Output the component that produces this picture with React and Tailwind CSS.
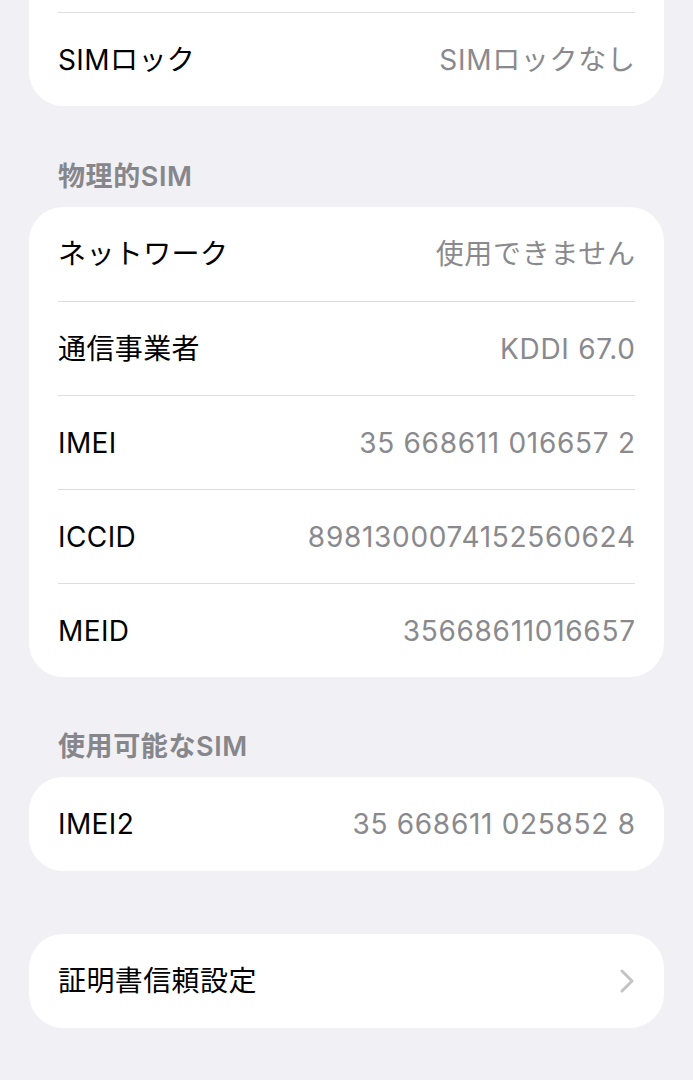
import React from 'react'

const font = { fontFamily: 'Inter, "Noto Sans CJK JP", sans-serif' }

const Row = ({ label, value, first, chevron, h = 'h-[94px]' }) => (
  <div
    className={
      'mx-[29px] flex items-center justify-between ' + h + ' ' +
      (first ? '' : 'border-t border-[#dedee2]')
    }
  >
    <span className="text-[28px] text-black tracking-[0.4px]">{label}</span>
    {chevron ? (
      <svg width="14" height="24" viewBox="0 0 14 24" className="mr-[1px]">
        <polyline
          points="2,2 12,12 2,22"
          fill="none"
          stroke="#c4c4c7"
          strokeWidth="3"
          strokeLinecap="round"
          strokeLinejoin="round"
        />
      </svg>
    ) : (
      <span className="text-[28px] text-[#8a8a8e] tracking-[0.7px] -mr-[0.7px]">{value}</span>
    )}
  </div>
)

const Header = ({ children }) => (
  <div className="px-[58px] h-[34px] leading-[34px] text-[27px] font-semibold text-[#86868b] tracking-[0.6px] mb-[13px]">
    {children}
  </div>
)

export default function App() {
  return (
    <div className="min-h-[1080px] bg-[#f0f0f5] overflow-hidden" style={font}>
      {/* top card, cut off above the window */}
      <div className="mx-[29px] bg-white rounded-b-[34px] pt-[12px]">
        <div className="mx-[29px] border-t border-[#dedee2]" />
        <div className="-mt-[1px] pt-[2px]">
          <Row label="SIMロック" value="SIMロックなし" first h="h-[92px]" />
        </div>
      </div>

      <div className="pt-[54px]">
        <Header>物理的SIM</Header>
      </div>
      <div className="mx-[29px] bg-white rounded-[34px]">
        <Row label="ネットワーク" value="使用できません" first />
        <Row label="通信事業者" value="KDDI 67.0" />
        <Row label="IMEI" value="35 668611 016657 2" />
        <Row label="ICCID" value="8981300074152560624" />
        <Row label="MEID" value="35668611016657" />
      </div>

      <div className="pt-[53px]">
        <Header>使用可能なSIM</Header>
      </div>
      <div className="mx-[29px] bg-white rounded-[34px]">
        <Row label="IMEI2" value="35 668611 025852 8" first />
      </div>

      <div className="mx-[29px] mt-[63px] bg-white rounded-[34px]">
        <Row label="証明書信頼設定" first chevron />
      </div>
    </div>
  )
}
